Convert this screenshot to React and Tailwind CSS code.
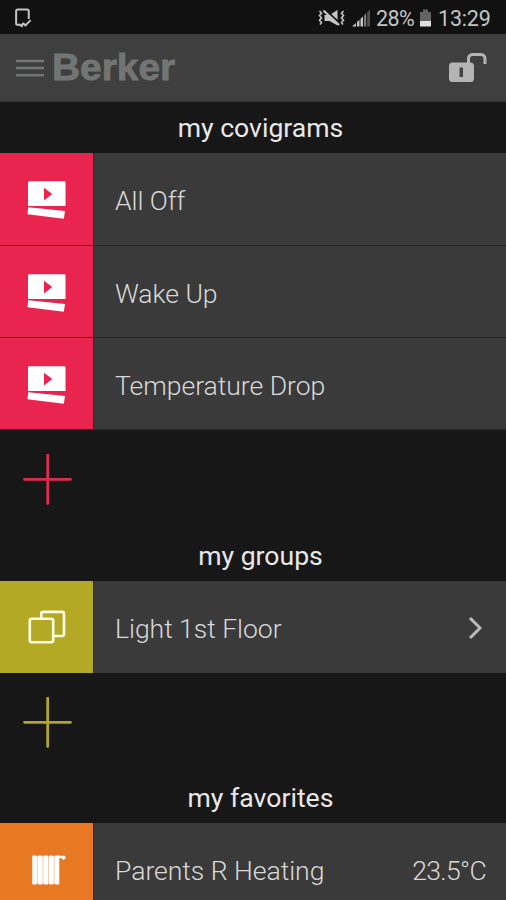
const covigrams = ['All Off', 'Wake Up', 'Temperature Drop'];

function CovigramIcon() {
  return (
    <svg width="93" height="91" viewBox="0 0 93 91" fill="#fff">
      <path fillRule="evenodd" d="M29 28.300h35.500a1 1 0 0 1 1 1V53H28V29.300a1 1 0 0 1 1-1zM44 34.800v12.600l8.300-6.300z" />
      <path d="M28.200 54.200l36.800 3.800-1.200 7.800-36.300-4.600z" />
    </svg>
  );
}

function GroupIcon() {
  return (
    <svg width="93" height="92" viewBox="0 0 93 92" fill="none" stroke="#fdfbe4" strokeWidth="2.600">
      <rect x="29.800" y="37.800" width="23.400" height="23.500" rx="2" />
      <path d="M41.300 37.500V32.900a2 2 0 0 1 2-2H62a2 2 0 0 1 2 2V53a2 2 0 0 1-2 2h-8.500" />
    </svg>
  );
}

function HeatingIcon() {
  return (
    <svg width="93" height="92" viewBox="0 0 93 92" fill="#fff">
      <rect x="33" y="33.500" width="26" height="27" opacity="0.6" />
      {[32.2, 37.8, 43.4, 49, 54.6].map((x) => (
        <rect key={x} x={x} y="32.500" width="4.700" height="29" rx="1" />
      ))}
      <path d="M58 32.700h4v2.500h-4z" />
      <circle cx="63.500" cy="34.600" r="2.100" />
    </svg>
  );
}

function StatusBar() {
  return (
    <div className="h-[34px] shrink-0 flex items-center bg-[#111] px-[14px] pt-[2px] text-[#c4c4c4]">
      <svg width="19" height="20" viewBox="0 0 18 19" fill="none" stroke="currentColor" strokeWidth="1.900">
        <path d="M14 10.500V3A1.500 1.500 0 0 0 12.500 1.500h-9A1.500 1.500 0 0 0 2 3v11.500A1.500 1.500 0 0 0 3.500 16H6" />
        <path d="M4.500 15.500l3 1.700 1-3M8.500 14.200l2.300 2.300 5-5" />
      </svg>
      <div className="ml-auto flex items-center">
        {/* Vibrate / muted */}
        <svg width="28" height="18" viewBox="0 0 28 18" fill="none" stroke="currentColor" strokeWidth="1.600">
          <path d="M1.500 2l2 2.300-2 2.300 2 2.300-2 2.300 2 2.300-1.500 2M25.500 2l-2 2.300 2 2.300-2 2.300 2 2.300-2 2.300 1.500 2" />
          <path d="M6.500 6h5L19.500 1v15.500l-8-4.500h-5z" fill="currentColor" stroke="none" />
          <path d="M7.500 1L21 13.500" stroke="#111" strokeWidth="1.800" />
          <path d="M5.500 1.500L21 16" strokeWidth="2.200" />
        </svg>
        {/* Signal */}
        <svg className="ml-[6px]" width="19" height="18" viewBox="0 0 19 18" fill="currentColor">
          <path d="M0 17.500L4 14v3.500z" />
          <path d="M5 13l2.500-2.300v6.800H5z" />
          <path d="M8.500 9.700L11 7.400v10.100H8.500z" />
          <path d="M12 6.400l2.200-2.200v13.300H12z" fill="#7d7d7d" />
          <path d="M15.200 3.200L18 .5v17h-2.800z" fill="#505050" />
        </svg>
        <span className="ml-[5px] mt-[2px] w-[40px] text-[21.500px] leading-none tracking-[-0.600px] whitespace-nowrap">28%</span>
        {/* Battery */}
        <svg className="ml-[3px]" width="13" height="18" viewBox="0 0 13 18">
          <path d="M4 .5h5V3h3v9H1V3h3z" fill="#626262" />
          <rect x="1" y="12" width="11" height="5.500" fill="#dedede" />
        </svg>
        <span className="ml-[6px] mt-[2px] w-[54px] text-[21.500px] leading-none tracking-[-0.200px] whitespace-nowrap">13:29</span>
      </div>
    </div>
  );
}

function SectionTitle({ children }) {
  return (
    <h2 className="h-[51px] shrink-0 pl-[15px] pt-[2px] flex items-center justify-center text-[26.600px] leading-none text-[#e8e8e8]">
      {children}
    </h2>
  );
}

function Row({ icon, color, label, children, className = '' }) {
  return (
    <div className={`h-[92px] shrink-0 flex bg-[#3a3a3a] ${className}`}>
      <div className={`w-[94px] shrink-0 border-r border-[#25282b] ${color}`}>{icon}</div>
      <div className="flex-1 flex items-center justify-between pl-[21px] pr-5 pt-[4px] text-[26.600px] font-light text-[#d8d8d8]">
        <span className="tracking-[-0.050px]">{label}</span>
        {children}
      </div>
    </div>
  );
}

function AddButton({ className }) {
  return (
    <button className={`shrink-0 flex items-center pl-[23px] ${className}`}>
      <svg width="50" height="52" viewBox="0 0 50 52" stroke="currentColor" strokeWidth="2.800" strokeLinecap="round">
        <path d="M1.500 25.300h46M24.700 1v48.500" />
      </svg>
    </button>
  );
}

export default function App() {
  return (
    <div className="w-full h-[900px] overflow-hidden flex flex-col bg-[#171717] font-['Roboto',sans-serif]">
      <StatusBar />

      {/* App bar */}
      <header className="h-[68px] shrink-0 flex items-center bg-[#3f3f3f] border-b border-[#333] pl-4 pr-[18px] text-[#737575]">
        <svg width="28" height="20" viewBox="0 0 28 20" stroke="currentColor" strokeWidth="2.600">
          <path d="M0 3h28M0 10h28M0 17.200h28" />
        </svg>
        <span className="ml-[8px] origin-left scale-x-[1.080] text-[36px] leading-none font-bold font-['Liberation_Sans',sans-serif] [-webkit-text-stroke:0.8px_#737575]">
          Berker
        </span>
        <svg className="ml-auto" width="40" height="30" viewBox="0 0 40 30">
          <rect x="1" y="9.500" width="25" height="19.500" rx="3.500" fill="#b4b4b4" />
          <path d="M20.500 10V5.500a4 4 0 0 1 4-4H33a4 4 0 0 1 4 4V11" fill="none" stroke="#b4b4b4" strokeWidth="3" />
          <rect x="11.500" y="14.500" width="3.500" height="9.500" fill="#444" />
        </svg>
      </header>

      <SectionTitle>my covigrams</SectionTitle>
      <div className="shrink-0 flex flex-col pb-px bg-[#2a2a2a]">
        {covigrams.map((name, i) => (
          <Row
            key={name}
            className={i > 0 ? 'border-t border-[#252525]' : ''}
            icon={<CovigramIcon />}
            color="bg-[#e9254f]"
            label={name}
          />
        ))}
      </div>
      <AddButton className="h-[100px] text-[#df2b52]" />

      <SectionTitle>my groups</SectionTitle>
      <Row icon={<GroupIcon />} color="bg-[#b3a925]" label="Light 1st Floor">
        <svg className="mr-[3px] mb-[3px]" width="15" height="24" viewBox="0 0 15 24" fill="none" stroke="#b8b8b8" strokeWidth="3">
          <path d="M2 2l10 10L2 22" />
        </svg>
      </Row>
      <AddButton className="h-[99px] text-[#b3a52c]" />

      <SectionTitle>my favorites</SectionTitle>
      <Row icon={<HeatingIcon />} color="bg-[#e97822]" label="Parents R Heating">
        <span className="tracking-[-0.700px]">23.5°C</span>
      </Row>
    </div>
  );
}
